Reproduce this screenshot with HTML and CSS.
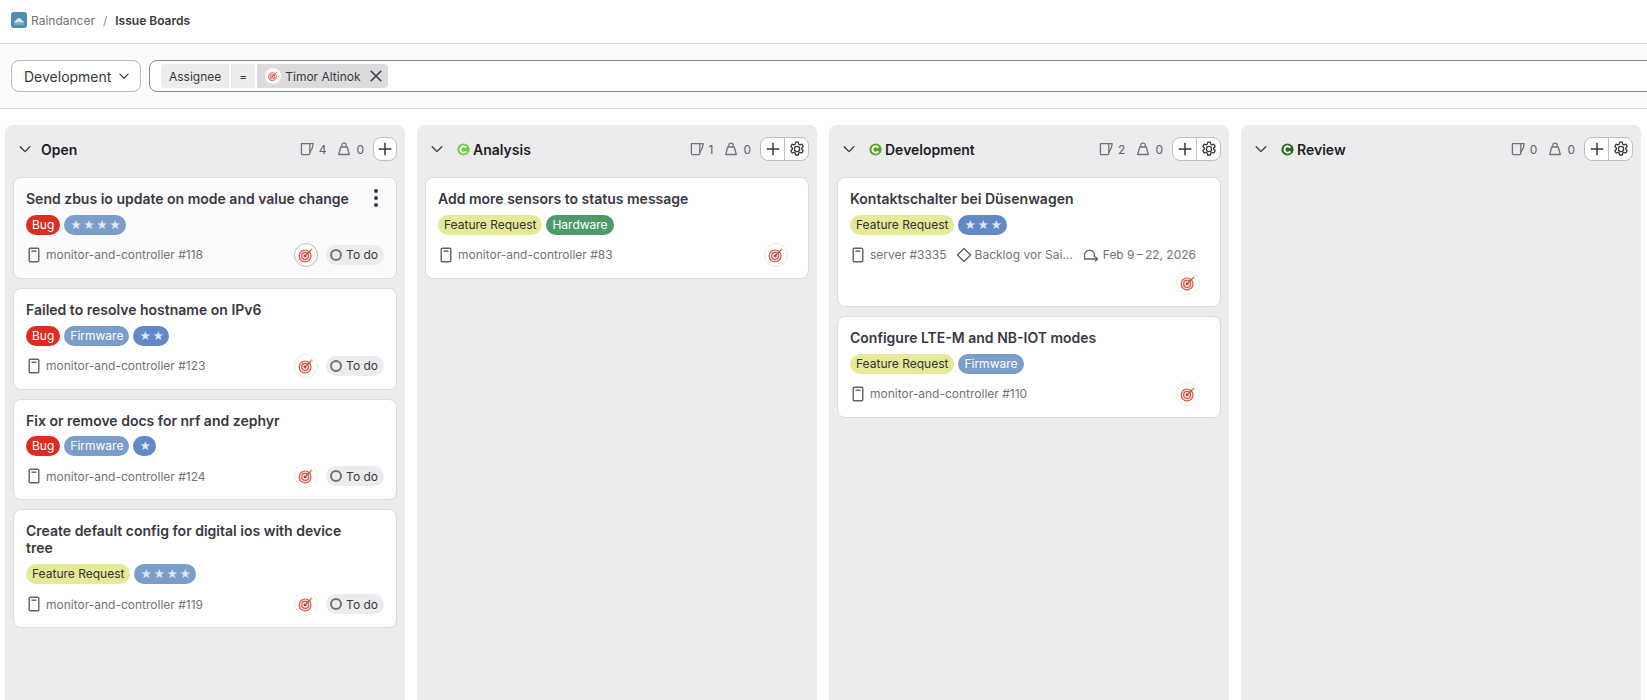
FILE: index.html
```html
<!DOCTYPE html>
<html lang="en">
<head>
    <meta charset="UTF-8">
    <title>Issue Boards</title>
    <link rel="stylesheet" href="styles.css">
</head>
<body>
    <svg class="icon-defs" width="0" height="0">
        <defs>
            <symbol id="i-chevron" viewBox="0 0 16 16"><path d="M2.5 5.5 8 11l5.500-5.500" fill="none" stroke="currentColor" stroke-width="1.500" stroke-linecap="round" stroke-linejoin="round"/></symbol>
            <symbol id="i-issue" viewBox="0 0 16 16"><path d="M4.500 1.200h7c.8 0 1.300.5 1.300 1.300v11c0 .8-.5 1.300-1.300 1.300h-7c-.8 0-1.300-.5-1.300-1.300v-11c0-.8.500-1.300 1.300-1.300Z" fill="none" stroke="currentColor" stroke-width="1.400"/><path d="M5.500 4.200h5" stroke="currentColor" stroke-width="1.400"/></symbol>
            <symbol id="i-mug" viewBox="0 0 16 16"><path d="M2.400 2.600h8.400v9.600a1.400 1.400 0 0 1-1.400 1.400H3.800a1.400 1.400 0 0 1-1.400-1.400Z" fill="none" stroke="currentColor" stroke-width="1.300" stroke-linejoin="round"/><path d="M10.800 2.600h3.400l-1 4.500-2.400 4.400" fill="none" stroke="currentColor" stroke-width="1.300" stroke-linejoin="round"/></symbol>
            <symbol id="i-weight" viewBox="0 0 16 16"><path d="M5.800 6V4.200C5.800 3 6.700 2.200 8 2.200s2.200.8 2.200 2V6" fill="none" stroke="currentColor" stroke-width="1.300"/><path d="M4.700 6h6.600l2 7.500H2.700Z" fill="none" stroke="currentColor" stroke-width="1.300" stroke-linejoin="round"/></symbol>
            <symbol id="i-plus" viewBox="0 0 16 16"><path d="M8 2.200v11.600M2.200 8h11.600" stroke="currentColor" stroke-width="1.500" stroke-linecap="round"/></symbol>
            <symbol id="i-gear" viewBox="0 0 16 16"><path d="M6.700.9h2.600l.4 2 1.300.7 1.900-.7 1.300 2.300-1.500 1.400v1.400l1.500 1.400-1.300 2.300-1.900-.7-1.300.7-.4 2H6.700l-.4-2-1.300-.7-1.900.7-1.300-2.300 1.500-1.400V6.600L1.800 5.200l1.300-2.300 1.900.7 1.300-.7Z" fill="none" stroke="currentColor" stroke-width="1.300" stroke-linejoin="round" transform="translate(0 .3)"/><circle cx="8" cy="8" r="2.600" fill="none" stroke="currentColor" stroke-width="1.300"/></symbol>
            <symbol id="i-target" viewBox="0 0 16 16"><circle cx="7.200" cy="8.800" r="5.800" fill="#d95a50"/><circle cx="7.200" cy="8.800" r="4.700" fill="#f8e3df"/><circle cx="7.200" cy="8.800" r="3.600" fill="#d95a50"/><circle cx="7.200" cy="8.800" r="2.500" fill="#f8e3df"/><circle cx="7.200" cy="8.800" r="1.300" fill="#d03f36"/><path d="M7.200 8.800 13 3" stroke="#7a6240" stroke-width=".9"/><path d="M12.500 1.600l1.900 1.900-1.400.3-.8-.8Z" fill="#e8b931"/></symbol>
            <symbol id="i-status" viewBox="0 0 16 16"><circle cx="8" cy="8" r="6.500" fill="currentColor"/><path d="M10.900 6a3.400 3.400 0 1 0 0 4" fill="none" stroke="#fff" stroke-width="2"/></symbol>
            <symbol id="i-milestone" viewBox="0 0 16 16"><path d="M8 1.400 14.600 8 8 14.600 1.400 8Z" fill="none" stroke="currentColor" stroke-width="1.400" stroke-linejoin="round"/></symbol>
            <symbol id="i-iteration" viewBox="0 0 16 16"><path d="M1.800 11.400C.6 7 2.700 3.200 6.500 3.200s5.800 3.600 4.500 7" fill="none" stroke="currentColor" stroke-width="1.300"/><path d="M1 12h13.500M12.200 9.700l2.400 2.300-2.400 2.300" fill="none" stroke="currentColor" stroke-width="1.300"/></symbol>
            <symbol id="i-close" viewBox="0 0 16 16"><path d="M2.500 2.500l11 11M13.500 2.500l-11 11" stroke="currentColor" stroke-width="1.700" stroke-linecap="round"/></symbol>
            <symbol id="i-logo" viewBox="0 0 16 16"><rect width="16" height="16" rx="3" fill="#4e8cb0"/><path d="M3 10.500c0-1.200.9-2 2-2 .3-1.500 1.500-2.500 3-2.500s2.700 1 3 2.500c1.100 0 2 .8 2 2Z" fill="#d5e6ef"/><path d="M3.500 12h9" stroke="#a9cbdc" stroke-width="1"/></symbol>
        </defs>
    </svg>

    <header class="topbar">
        <svg class="logo"><use href="#i-logo"/></svg>
        <span class="crumb">Raindancer</span>
        <span class="crumb-sep">/</span>
        <span class="crumb-current">Issue Boards</span>
    </header>

    <div class="filterbar">
        <button class="board-select">Development <svg class="ic-12"><use href="#i-chevron"/></svg></button>
        <div class="filter-input">
            <span class="token token-key">Assignee</span>
            <span class="token token-op">=</span>
            <span class="token token-value">
                <span class="avatar avatar-sm"><svg><use href="#i-target"/></svg></span>
                Timor Altinok
                <svg class="ic-close"><use href="#i-close"/></svg>
            </span>
        </div>
    </div>

    <main class="board">
        <section class="col">
            <div class="col-head">
                <svg class="col-chevron"><use href="#i-chevron"/></svg>
                <h2 class="col-title">Open</h2>
                <div class="col-counts">
                    <svg class="ic-16"><use href="#i-mug"/></svg><span>4</span>
                    <svg class="ic-16 gap-icon"><use href="#i-weight"/></svg><span>0</span>
                </div>
                <div class="btn-group">
                    <button class="btn-icon"><svg class="ic-16"><use href="#i-plus"/></svg></button>
                </div>
            </div>
            <div class="cards">
                <article class="card card-hover">
                    <button class="card-more"><i></i><i></i><i></i></button>
                    <h3 class="card-title">Send zbus io update on mode and value change</h3>
                    <div class="labels">
                        <span class="label label-bug">Bug</span>
                        <span class="label label-stars label-prio4">★★★★</span>
                    </div>
                    <div class="card-foot">
                        <svg class="ic-16 issue-ic"><use href="#i-issue"/></svg>
                        <span class="ref">monitor-and-controller #118</span>
                        <span class="avatar avatar-ring"><svg><use href="#i-target"/></svg></span>
                        <span class="todo"><i class="todo-dot"></i>To do</span>
                    </div>
                </article>
                <article class="card">
                    <h3 class="card-title">Failed to resolve hostname on IPv6</h3>
                    <div class="labels">
                        <span class="label label-bug">Bug</span>
                        <span class="label label-firmware">Firmware</span>
                        <span class="label label-stars label-prio2">★★</span>
                    </div>
                    <div class="card-foot">
                        <svg class="ic-16 issue-ic"><use href="#i-issue"/></svg>
                        <span class="ref">monitor-and-controller #123</span>
                        <span class="avatar"><svg><use href="#i-target"/></svg></span>
                        <span class="todo"><i class="todo-dot"></i>To do</span>
                    </div>
                </article>
                <article class="card">
                    <h3 class="card-title">Fix or remove docs for nrf and zephyr</h3>
                    <div class="labels">
                        <span class="label label-bug">Bug</span>
                        <span class="label label-firmware">Firmware</span>
                        <span class="label label-stars label-prio1">★</span>
                    </div>
                    <div class="card-foot">
                        <svg class="ic-16 issue-ic"><use href="#i-issue"/></svg>
                        <span class="ref">monitor-and-controller #124</span>
                        <span class="avatar"><svg><use href="#i-target"/></svg></span>
                        <span class="todo"><i class="todo-dot"></i>To do</span>
                    </div>
                </article>
                <article class="card">
                    <h3 class="card-title">Create default config for digital ios with device tree</h3>
                    <div class="labels">
                        <span class="label label-feature">Feature Request</span>
                        <span class="label label-stars label-prio4">★★★★</span>
                    </div>
                    <div class="card-foot">
                        <svg class="ic-16 issue-ic"><use href="#i-issue"/></svg>
                        <span class="ref">monitor-and-controller #119</span>
                        <span class="avatar"><svg><use href="#i-target"/></svg></span>
                        <span class="todo"><i class="todo-dot"></i>To do</span>
                    </div>
                </article>
            </div>
        </section>

        <section class="col">
            <div class="col-head">
                <svg class="col-chevron"><use href="#i-chevron"/></svg>
                <svg class="col-status status-analysis"><use href="#i-status"/></svg>
                <h2 class="col-title">Analysis</h2>
                <div class="col-counts">
                    <svg class="ic-16"><use href="#i-mug"/></svg><span>1</span>
                    <svg class="ic-16 gap-icon"><use href="#i-weight"/></svg><span>0</span>
                </div>
                <div class="btn-group">
                    <button class="btn-icon"><svg class="ic-16"><use href="#i-plus"/></svg></button>
                    <button class="btn-icon"><svg class="ic-16"><use href="#i-gear"/></svg></button>
                </div>
            </div>
            <div class="cards">
                <article class="card">
                    <h3 class="card-title">Add more sensors to status message</h3>
                    <div class="labels">
                        <span class="label label-feature">Feature Request</span>
                        <span class="label label-hardware">Hardware</span>
                    </div>
                    <div class="card-foot">
                        <svg class="ic-16 issue-ic"><use href="#i-issue"/></svg>
                        <span class="ref">monitor-and-controller #83</span>
                        <span class="avatar avatar-end"><svg><use href="#i-target"/></svg></span>
                    </div>
                </article>
            </div>
        </section>

        <section class="col">
            <div class="col-head">
                <svg class="col-chevron"><use href="#i-chevron"/></svg>
                <svg class="col-status status-dev"><use href="#i-status"/></svg>
                <h2 class="col-title">Development</h2>
                <div class="col-counts">
                    <svg class="ic-16"><use href="#i-mug"/></svg><span>2</span>
                    <svg class="ic-16 gap-icon"><use href="#i-weight"/></svg><span>0</span>
                </div>
                <div class="btn-group">
                    <button class="btn-icon"><svg class="ic-16"><use href="#i-plus"/></svg></button>
                    <button class="btn-icon"><svg class="ic-16"><use href="#i-gear"/></svg></button>
                </div>
            </div>
            <div class="cards">
                <article class="card">
                    <h3 class="card-title">Kontaktschalter bei Düsenwagen</h3>
                    <div class="labels">
                        <span class="label label-feature">Feature Request</span>
                        <span class="label label-stars label-prio3">★★★</span>
                    </div>
                    <div class="card-foot">
                        <svg class="ic-16 issue-ic"><use href="#i-issue"/></svg>
                        <span class="ref">server #3335</span>
                        <svg class="ic-16 meta-ic"><use href="#i-milestone"/></svg>
                        <span class="ref">Backlog vor Sai...</span>
                        <svg class="ic-16 meta-ic meta-ic-wide"><use href="#i-iteration"/></svg>
                        <span class="ref">Feb 9&thinsp;–&thinsp;22, 2026</span>
                    </div>
                    <div class="card-foot-extra">
                        <span class="avatar"><svg><use href="#i-target"/></svg></span>
                    </div>
                </article>
                <article class="card">
                    <h3 class="card-title">Configure LTE-M and NB-IOT modes</h3>
                    <div class="labels">
                        <span class="label label-feature">Feature Request</span>
                        <span class="label label-firmware">Firmware</span>
                    </div>
                    <div class="card-foot">
                        <svg class="ic-16 issue-ic"><use href="#i-issue"/></svg>
                        <span class="ref">monitor-and-controller #110</span>
                        <span class="avatar avatar-end"><svg><use href="#i-target"/></svg></span>
                    </div>
                </article>
            </div>
        </section>

        <section class="col">
            <div class="col-head">
                <svg class="col-chevron"><use href="#i-chevron"/></svg>
                <svg class="col-status status-review"><use href="#i-status"/></svg>
                <h2 class="col-title">Review</h2>
                <div class="col-counts">
                    <svg class="ic-16"><use href="#i-mug"/></svg><span>0</span>
                    <svg class="ic-16 gap-icon"><use href="#i-weight"/></svg><span>0</span>
                </div>
                <div class="btn-group">
                    <button class="btn-icon"><svg class="ic-16"><use href="#i-plus"/></svg></button>
                    <button class="btn-icon"><svg class="ic-16"><use href="#i-gear"/></svg></button>
                </div>
            </div>
        </section>
    </main>
</body>
</html>
```

FILE: styles.css
```css
* {
    box-sizing: border-box;
}
html, body {
    height: 100%;
    overflow: hidden;
}
body {
    margin: 0;
    background: #fff;
    color: #3a383f;
    font-family: Inter, "Noto Sans", sans-serif;
    font-size: 12px;
}
button {
    font-family: inherit;
}
.icon-defs {
    position: absolute;
}
.ic-12 {
    width: 12px;
    height: 12px;
}
.ic-16 {
    width: 16px;
    height: 16px;
    flex: none;
}

/* top bar */
.topbar {
    display: flex;
    align-items: center;
    height: 44px;
    padding: 0 11px 3px;
    border-bottom: 1px solid #dcdcde;
}
.logo {
    width: 16px;
    height: 16px;
    margin-right: 4px;
}
.crumb {
    color: #737278;
}
.crumb-sep {
    margin: 0 8px;
    color: #89888d;
}
.crumb-current {
    color: #3a383f;
    font-weight: 600;
}

/* filter bar */
.filterbar {
    display: flex;
    gap: 8px;
    height: 65px;
    padding: 16px 0 0 11px;
    background: #fbfafd;
    border-bottom: 1px solid #dcdcde;
}
.board-select {
    display: flex;
    align-items: center;
    justify-content: space-between;
    width: 130px;
    height: 32px;
    padding: 0 10px 0 12px;
    background: #fff;
    border: 1px solid #bfbfc3;
    border-radius: 8px;
    color: #3a383f;
    font-size: 14px;
}
.filter-input {
    display: flex;
    flex: 1;
    gap: 2px;
    height: 32px;
    margin-right: -12px;
    padding: 3px 11px;
    background: #fff;
    border: 1px solid #89888d;
    border-radius: 8px 0 0 8px;
}
.token {
    display: flex;
    align-items: center;
    height: 24px;
    padding: 0 8px;
    background: #ececef;
    color: #3a383f;
}
.token-key {
    border-radius: 4px 0 0 4px;
}
.token-value {
    gap: 4px;
    padding: 0 5px 0 8px;
    background: #dcdcde;
    border-radius: 0 4px 4px 0;
}
.ic-close {
    width: 14px;
    height: 14px;
    margin-left: 4px;
}

/* board */
.board {
    display: flex;
    gap: 12px;
    padding: 16px 0 0 5px;
}
.col {
    flex: 0 0 400px;
    height: 600px;
    background: #ececef;
    border-radius: 8px;
}
.col-head {
    display: flex;
    align-items: center;
    height: 52px;
    padding: 0 8px 4px 13px;
}
.col-chevron {
    width: 14px;
    height: 14px;
    margin-right: 9px;
    color: #3a383f;
}
.col-status {
    width: 15px;
    height: 15px;
    margin: 0 2px 0 3px;
}
.status-analysis {
    color: #6bcf3f;
}
.status-dev {
    color: #55a630;
}
.status-review {
    color: #2f6b1f;
}
.col-title {
    margin: 0;
    color: #1f1e24;
    font-size: 14px;
    font-weight: 600;
}
.col-counts {
    display: flex;
    align-items: center;
    gap: 4px;
    margin-left: auto;
    margin-right: 9px;
    color: #626168;
}
.col-counts .ic-16 {
    color: #737278;
}
.gap-icon {
    margin-left: 6px;
}
.btn-group {
    display: flex;
    background: #fff;
    border: 1px solid #bfbfc3;
    border-radius: 8px;
}
.btn-icon {
    display: flex;
    align-items: center;
    justify-content: center;
    width: 23px;
    height: 22px;
    padding: 0;
    background: none;
    border: 0;
    color: #3a383f;
}
.btn-icon:only-child {
    width: 22px;
}
.btn-icon + .btn-icon {
    width: 24px;
    border-left: 1px solid #bfbfc3;
}
.cards {
    display: flex;
    flex-direction: column;
    gap: 9px;
    padding: 0 8px;
}

/* card */
.card {
    position: relative;
    padding: 12px 12px 11px;
    background: #fff;
    border: 1px solid #dcdcde;
    border-radius: 8px;
}
.card-hover {
    background: #fbfafd;
}
.card-title {
    margin: 0 16px 7.75px 0;
    color: #3a383f;
    font-size: 14px;
    font-weight: 600;
    line-height: 17px;
}
.card-more {
    position: absolute;
    top: 9px;
    right: 12px;
    display: flex;
    flex-direction: column;
    align-items: center;
    gap: 3px;
    width: 16px;
    padding: 2px 0;
    background: none;
    border: 0;
}
.card-more i {
    width: 4px;
    height: 4px;
    background: #3a383f;
    border-radius: 50%;
}
.labels {
    display: flex;
    gap: 4px;
}
.label {
    height: 20px;
    padding: 0 6px;
    border-radius: 10px;
    font-size: 12px;
    line-height: 20px;
}
.label-bug {
    background: #dd2c22;
    color: #fff;
}
.label-feature {
    background: #e6e995;
    color: #333238;
}
.label-firmware {
    background: #7b9dc9;
    color: #fff;
}
.label-hardware {
    background: #4f9a6a;
    color: #fff;
}
.label-stars {
    padding: 0 4px 0 6px;
    color: #e3e9f4;
    font-size: 11px;
    letter-spacing: 1.5px;
}
.label-prio4 {
    background: #7b9dc9;
}
.label-prio3,
.label-prio2,
.label-prio1 {
    background: #6289c5;
}
.card-foot {
    display: flex;
    align-items: center;
    height: 24px;
    margin-top: 8px;
    color: #737278;
}
.issue-ic {
    margin-right: 4px;
    color: #626168;
}
.meta-ic {
    margin: 0 3px 0 9px;
    color: #626168;
}
.meta-ic-wide {
    margin: 0 4px 0 10px;
}
.avatar {
    display: flex;
    align-items: center;
    justify-content: center;
    width: 24px;
    height: 24px;
    margin-left: auto;
    background: #fff;
    border: 1px solid #ececef;
    border-radius: 50%;
}
.avatar svg {
    width: 18px;
    height: 18px;
}
.avatar-ring {
    border-color: #bfbfc3;
}
.avatar-sm {
    width: 16px;
    height: 16px;
    margin: 0;
    border: 0;
}
.avatar-sm svg {
    width: 12px;
    height: 12px;
}
.avatar-end {
    margin-right: 8px;
}
.card-foot-extra {
    display: flex;
    justify-content: flex-end;
    margin: 4px 8px 0 0;
}
.todo {
    display: flex;
    align-items: center;
    gap: 4px;
    height: 20px;
    margin-left: 8px;
    padding: 0 6px 0 4px;
    background: #ececef;
    border-radius: 10px;
    color: #3a383f;
}
.todo-dot {
    width: 12px;
    height: 12px;
    border: 2px solid #737278;
    border-radius: 50%;
}
```
